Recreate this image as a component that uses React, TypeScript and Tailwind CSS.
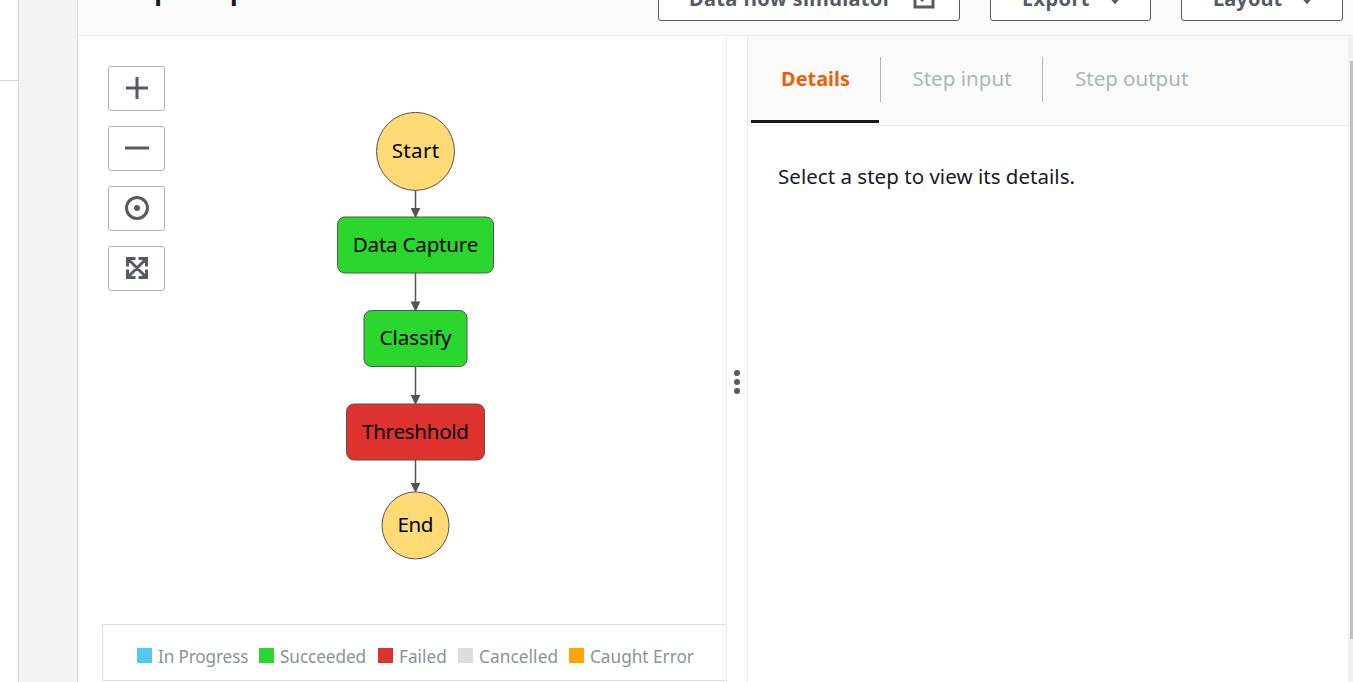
import React from "react";

type GraphNode = {
  label: string;
  shape: "circle" | "rect";
  cy: number;
  width: number;
  height: number;
  fill: string;
  textWidth: number;
};

const NODES: GraphNode[] = [
  { label: "Start", shape: "circle", cy: 115.4, width: 78, height: 78, fill: "#ffda75", textWidth: 47.5 },
  { label: "Data Capture", shape: "rect", cy: 209, width: 156, height: 56, fill: "#2bd62e", textWidth: 125.5 },
  { label: "Classify", shape: "rect", cy: 302.5, width: 103, height: 56, fill: "#2bd62e", textWidth: 72 },
  { label: "Threshhold", shape: "rect", cy: 396, width: 138, height: 56, fill: "#de322f", textWidth: 107 },
  { label: "End", shape: "circle", cy: 489.4, width: 67, height: 67, fill: "#ffda75", textWidth: 36 },
];

const CX = 337.5;

const LEGEND = [
  { label: "In Progress", swatch: "bg-[#53c9ed]", width: "w-[122px]", spacing: "tracking-[-0.15px]" },
  { label: "Succeeded", swatch: "bg-[#2bd62e]", width: "w-[119px]", spacing: "tracking-[-0.08px]" },
  { label: "Failed", swatch: "bg-[#de322f]", width: "w-[80px]", spacing: "tracking-[0px]" },
  { label: "Cancelled", swatch: "bg-[#dddddd]", width: "w-[111px]", spacing: "tracking-[0.1px]" },
  { label: "Caught Error", swatch: "bg-[#ffa500]", width: "w-[130px]", spacing: "tracking-[0px]" },
];

function StateGraph() {
  return (
    <svg width="648" height="588" viewBox="0 0 648 588" className="block">
      {NODES.slice(1).map((node, i) => {
        const prev = NODES[i];
        const top = node.cy - node.height / 2;
        return (
          <g key={node.label}>
            <path d={`M${CX} ${prev.cy + prev.height / 2}V${top - 6}`} stroke="#545454" strokeWidth="1.5" />
            <path d={`M${CX - 4.8} ${top - 9}h9.6L${CX} ${top + 1.2}z`} fill="#545454" />
          </g>
        );
      })}
      {NODES.map((node) => (
        <g key={node.label}>
          {node.shape === "circle" ? (
            <circle cx={CX} cy={node.cy} r={node.width / 2} fill={node.fill} stroke="#545454" strokeWidth="1" />
          ) : (
            <rect
              x={CX - node.width / 2}
              y={node.cy - node.height / 2}
              width={node.width}
              height={node.height}
              rx="7.5"
              fill={node.fill}
              stroke="#545454"
              strokeWidth="1"
            />
          )}
          <text
            x={CX}
            y={node.cy + 6.8}
            textAnchor="middle"
            textLength={node.textWidth}
            fontSize="20.6"
            fill="#000"
          >
            {node.label}
          </text>
        </g>
      ))}
    </svg>
  );
}

function ToolButton({ children }: { children: React.ReactNode }) {
  return (
    <button className="flex h-[45px] w-[57px] items-center justify-center rounded-[3px] border border-[#aab7b8] bg-white pb-px">
      <svg width="24" height="24" viewBox="0 0 24 24" fill="none" stroke="#545b64" strokeWidth="3">
        {children}
      </svg>
    </button>
  );
}

function Caret() {
  return (
    <svg width="12" height="8" viewBox="0 0 12 8" className="mt-[4px]">
      <path d="M0 0h12L6 7.5z" fill="#545b64" />
    </svg>
  );
}

const headerButton =
  "flex h-[45px] shrink-0 items-center rounded-[3px] border border-[#545b64] bg-white text-[20px] font-bold text-[#545b64] whitespace-nowrap";

export default function App() {
  return (
    <div className="flex h-[682px] w-[1353px] overflow-hidden bg-white font-['Noto_Sans',sans-serif] text-[#16191f]">
      <aside className="w-[19px] shrink-0 border-r border-[#d5dbdb]">
        <div className="h-[81px] border-b border-[#d5dbdb]" />
      </aside>
      <div className="w-[58px] shrink-0 bg-[#f2f3f3]" />
      <main className="flex w-[1276px] shrink-0 flex-col border-l border-[#d5dbdb]">
        <header className="flex h-9 shrink-0 items-end overflow-hidden border-b border-[#eaeded] bg-[#fafafa] pb-[14px] pl-[32px]">
          <h2 className="mb-[12px] w-[548px] shrink-0 text-[25.6px] leading-[36px] font-bold tracking-[-0.15px]">Graph inspector</h2>
          <button className={`${headerButton} w-[302px] pl-[30px]`}>
            <span className="w-[223px] text-left tracking-[0.3px]">Data flow simulator</span>
            <svg width="24" height="24" viewBox="0 0 24 24" fill="none" stroke="#545b64" strokeWidth="3" className="mb-[2px]">
              <path d="M10 3H3v18h18v-7M14 3h7v7M21 3 9 15" />
            </svg>
          </button>
          <button className={`${headerButton} ml-[30px] w-[161px] pl-[31px]`}>
            <span className="w-[87px] text-left tracking-[0.4px]">Export</span>
            <Caret />
          </button>
          <button className={`${headerButton} ml-[30px] w-[162px] pl-[31px]`}>
            <span className="w-[88px] text-left tracking-[0.1px]">Layout</span>
            <Caret />
          </button>
        </header>
        <div className="flex min-h-0 flex-1">
          <section className="relative flex w-[649px] shrink-0 flex-col border-r border-[#eaeded]">
            <StateGraph />
            <div className="ml-6 flex h-[57px] items-center border border-r-0 border-[#dddddd] pt-[6px] pl-[34px] text-[17.2px] text-[#879596]">
              {LEGEND.map((item) => (
                <div key={item.label} className={`flex shrink-0 items-center gap-[6px] whitespace-nowrap ${item.width}`}>
                  <span className={`size-[15px] shrink-0 ${item.swatch}`} />
                  <span className={`pt-[2px] ${item.spacing}`}>{item.label}</span>
                </div>
              ))}
            </div>
            <div className="absolute top-[30px] left-[30px] flex flex-col gap-[15px]">
              <ToolButton>
                <path d="M12 1v22M1 12h22" />
              </ToolButton>
              <ToolButton>
                <path d="M0 12h24" />
              </ToolButton>
              <ToolButton>
                <circle cx="12" cy="12" r="10.5" />
                <circle cx="12" cy="12" r="3" fill="#545b64" stroke="none" />
              </ToolButton>
              <ToolButton>
                <path d="M2.5 10.5V2.5H10.5M13.5 2.5H21.5V10.5M21.5 13.5V21.5H13.5M10.5 21.5H2.5V13.5M3 3l18 18M21 3 3 21" />
              </ToolButton>
            </div>
          </section>
          <div className="flex w-5 shrink-0 flex-col items-center gap-[3px] pt-[334px]">
            <span className="size-[6px] rounded-full bg-[#545b64]" />
            <span className="size-[6px] rounded-full bg-[#545b64]" />
            <span className="size-[6px] rounded-full bg-[#545b64]" />
          </div>
          <section className="w-[601px] shrink-0 border-l border-[#eaeded]">
            <nav className="flex h-[90px] border-b border-[#eaeded] bg-[#fafafa] pl-[3px] text-[20.6px] text-[#aab7b8]">
              <div className="flex h-[87px] w-[128px] justify-center border-b-[3px] border-[#16191f] pt-[27px] pl-px text-[19.9px] leading-[32px] font-bold text-[#eb5f07]">
                Details
              </div>
              <div className="mt-[21px] ml-px flex h-[45px] w-[163px] justify-center border-x border-[#aab7b8] pt-[5px] pl-px leading-[32px]">
                Step input
              </div>
              <div className="pt-[26px] pl-[32px] leading-[32px] tracking-[-0.05px]">Step output</div>
            </nav>
            <p className="pt-[34px] pl-[30px] text-[20.5px] leading-[32px] tracking-[0.03px]">Select a step to view its details.</p>
          </section>
          <div className="flex w-[5px] shrink-0 justify-end bg-[#f1f1f1] pt-[25px]">
            <div className="h-[578px] w-[3px] bg-[#c1c1c1]" />
          </div>
        </div>
      </main>
    </div>
  );
}
